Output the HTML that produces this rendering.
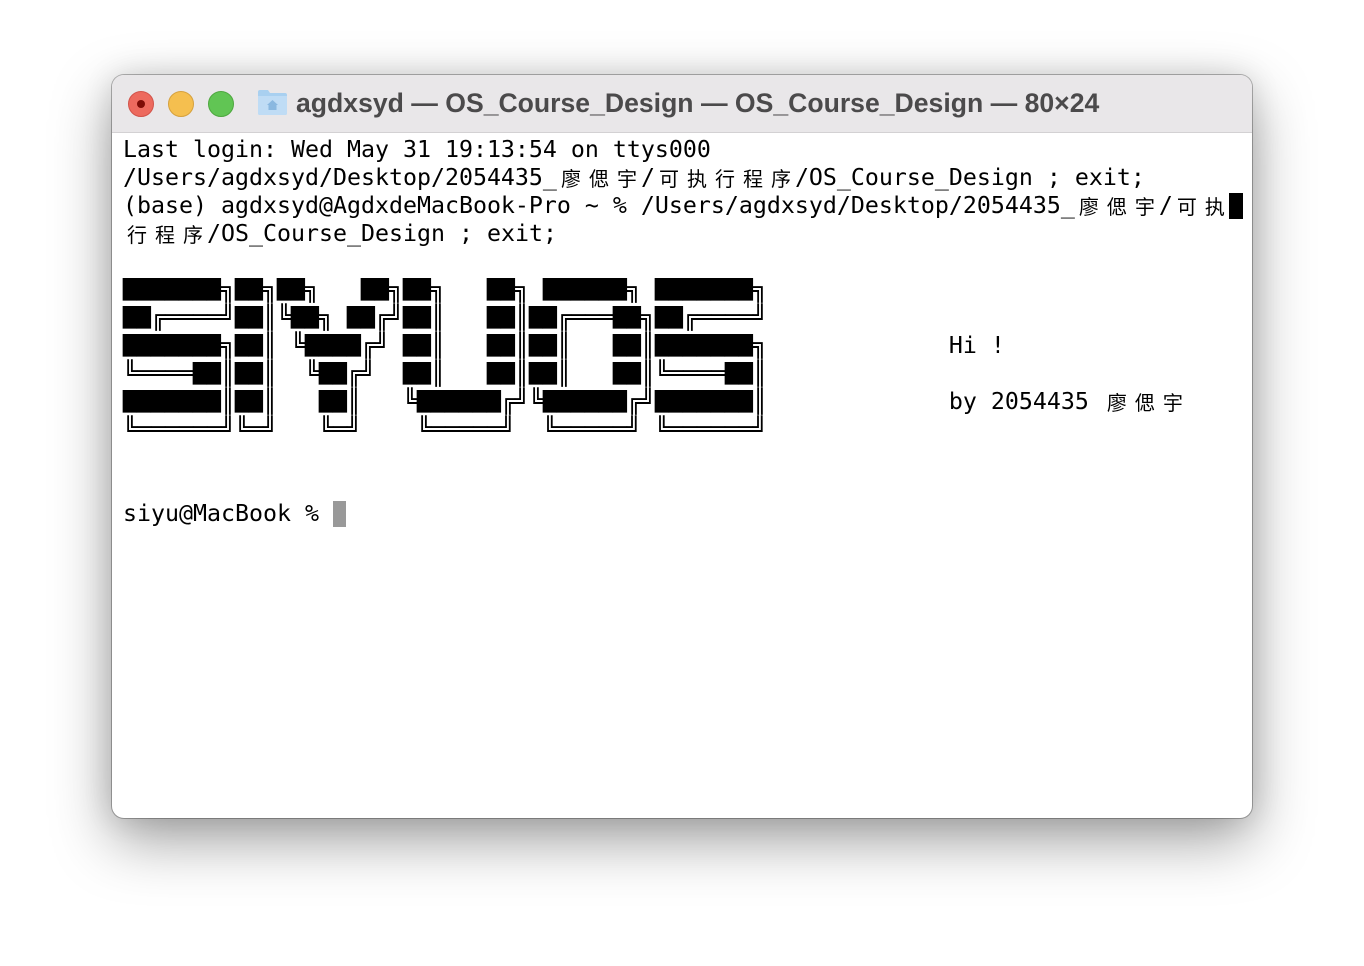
<!DOCTYPE html>
<html><head><meta charset="utf-8">
<style>
html,body{margin:0;padding:0;width:1364px;height:966px;background:#fff;overflow:hidden}
.win{position:absolute;left:112px;top:75px;width:1140px;height:743px;border-radius:12px;background:#fff;
box-shadow:0 0 0 1px rgba(0,0,0,0.28),0 22px 60px rgba(0,0,0,0.38),0 0 30px rgba(0,0,0,0.12);overflow:hidden}
.tb{position:absolute;left:0;top:0;width:1140px;height:57px;background:#e9e7e9;border-bottom:1px solid #d3d1d3}
.dot{position:absolute;top:16px;width:24px;height:24px;border-radius:50%}
.title{position:absolute;left:184px;top:13px;font:bold 26.6px "Liberation Sans",sans-serif;color:#4b4a4b;white-space:nowrap}
.term{position:absolute;left:11px;top:61px;font-family:"DejaVu Sans Mono","Liberation Mono",monospace;font-size:23.25px;line-height:28px;color:#000;white-space:pre}
.c{display:inline-block;width:28px;text-align:center;font-family:"Noto Sans CJK SC",sans-serif;font-size:20px;line-height:28px;vertical-align:top}
.l{height:28px}
.art{height:28px}
.art b{font-weight:normal;display:inline-block;transform:scaleY(0.82);transform-origin:50% 55%;vertical-align:top}
</style></head><body>
<div class="win">
 <div class="tb">
  <div class="dot" style="left:16px;background:#ed6a5e;border:0.5px solid #d2534a"><div style="position:absolute;left:8px;top:8px;width:8px;height:8px;border-radius:50%;background:#7e0c06"></div></div>
  <div class="dot" style="left:56px;background:#f5bf4f;border:0.5px solid #d6a13d"></div>
  <div class="dot" style="left:96px;background:#61c554;border:0.5px solid #4ea73f"></div>
  <svg style="position:absolute;left:145px;top:13px" width="31" height="28" viewBox="0 0 31 28">
   <path d="M1 4 Q1 2 3 2 H11 L13 5 H28 Q30 5 30 7 V25 Q30 27 28 27 H3 Q1 27 1 25Z" fill="#a9d0f0"/>
   <path d="M1 8 H30 V25 Q30 27 28 27 H3 Q1 27 1 25Z" fill="#bfdcf5"/>
   <path d="M15.5 12 L10 17 H11.5 V22 H19.5 V17 H21Z" fill="#8ab8e0"/>
  </svg>
  <div class="title">agdxsyd — OS_Course_Design — OS_Course_Design — 80×24</div>
 </div>
 <div class="term"><div class="l">Last login: Wed May 31 19:13:54 on ttys000</div><div class="l">/Users/agdxsyd/Desktop/2054435_<span class="c">廖</span><span class="c">偲</span><span class="c">宇</span>/<span class="c">可</span><span class="c">执</span><span class="c">行</span><span class="c">程</span><span class="c">序</span>/OS_Course_Design ; exit;</div><div class="l">(base) agdxsyd@AgdxdeMacBook-Pro ~ % /Users/agdxsyd/Desktop/2054435_<span class="c">廖</span><span class="c">偲</span><span class="c">宇</span>/<span class="c">可</span><span class="c">执</span><span style="display:inline-block;width:14px;height:26px;background:#000;vertical-align:top;margin-top:1px"></span></div><div class="l"><span class="c">行</span><span class="c">程</span><span class="c">序</span>/OS_Course_Design ; exit;</div><div class="l"></div><div class="art"><b>███████</b>╗<b>██</b>╗<b>██</b>╗   <b>██</b>╗<b>██</b>╗   <b>██</b>╗ <b>██████</b>╗ <b>███████</b>╗</div><div class="art"><b>██</b>╔════╝<b>██</b>║╚<b>██</b>╗ <b>██</b>╔╝<b>██</b>║   <b>██</b>║<b>██</b>╔═══<b>██</b>╗<b>██</b>╔════╝</div><div class="art"><b>███████</b>╗<b>██</b>║ ╚<b>████</b>╔╝ <b>██</b>║   <b>██</b>║<b>██</b>║   <b>██</b>║<b>███████</b>╗             Hi !</div><div class="art">╚════<b>██</b>║<b>██</b>║  ╚<b>██</b>╔╝  <b>██</b>║   <b>██</b>║<b>██</b>║   <b>██</b>║╚════<b>██</b>║</div><div class="art"><b>███████</b>║<b>██</b>║   <b>██</b>║   ╚<b>██████</b>╔╝╚<b>██████</b>╔╝<b>███████</b>║             by 2054435 <span class="c">廖</span><span class="c">偲</span><span class="c">宇</span></div><div class="art">╚══════╝╚═╝   ╚═╝    ╚═════╝  ╚═════╝ ╚══════╝</div><div class="l"></div><div class="l"></div><div class="l">siyu@MacBook % <span style="display:inline-block;width:13px;height:26px;background:#999;vertical-align:top;margin-top:1px"></span></div></div>
</div>
</body></html>
